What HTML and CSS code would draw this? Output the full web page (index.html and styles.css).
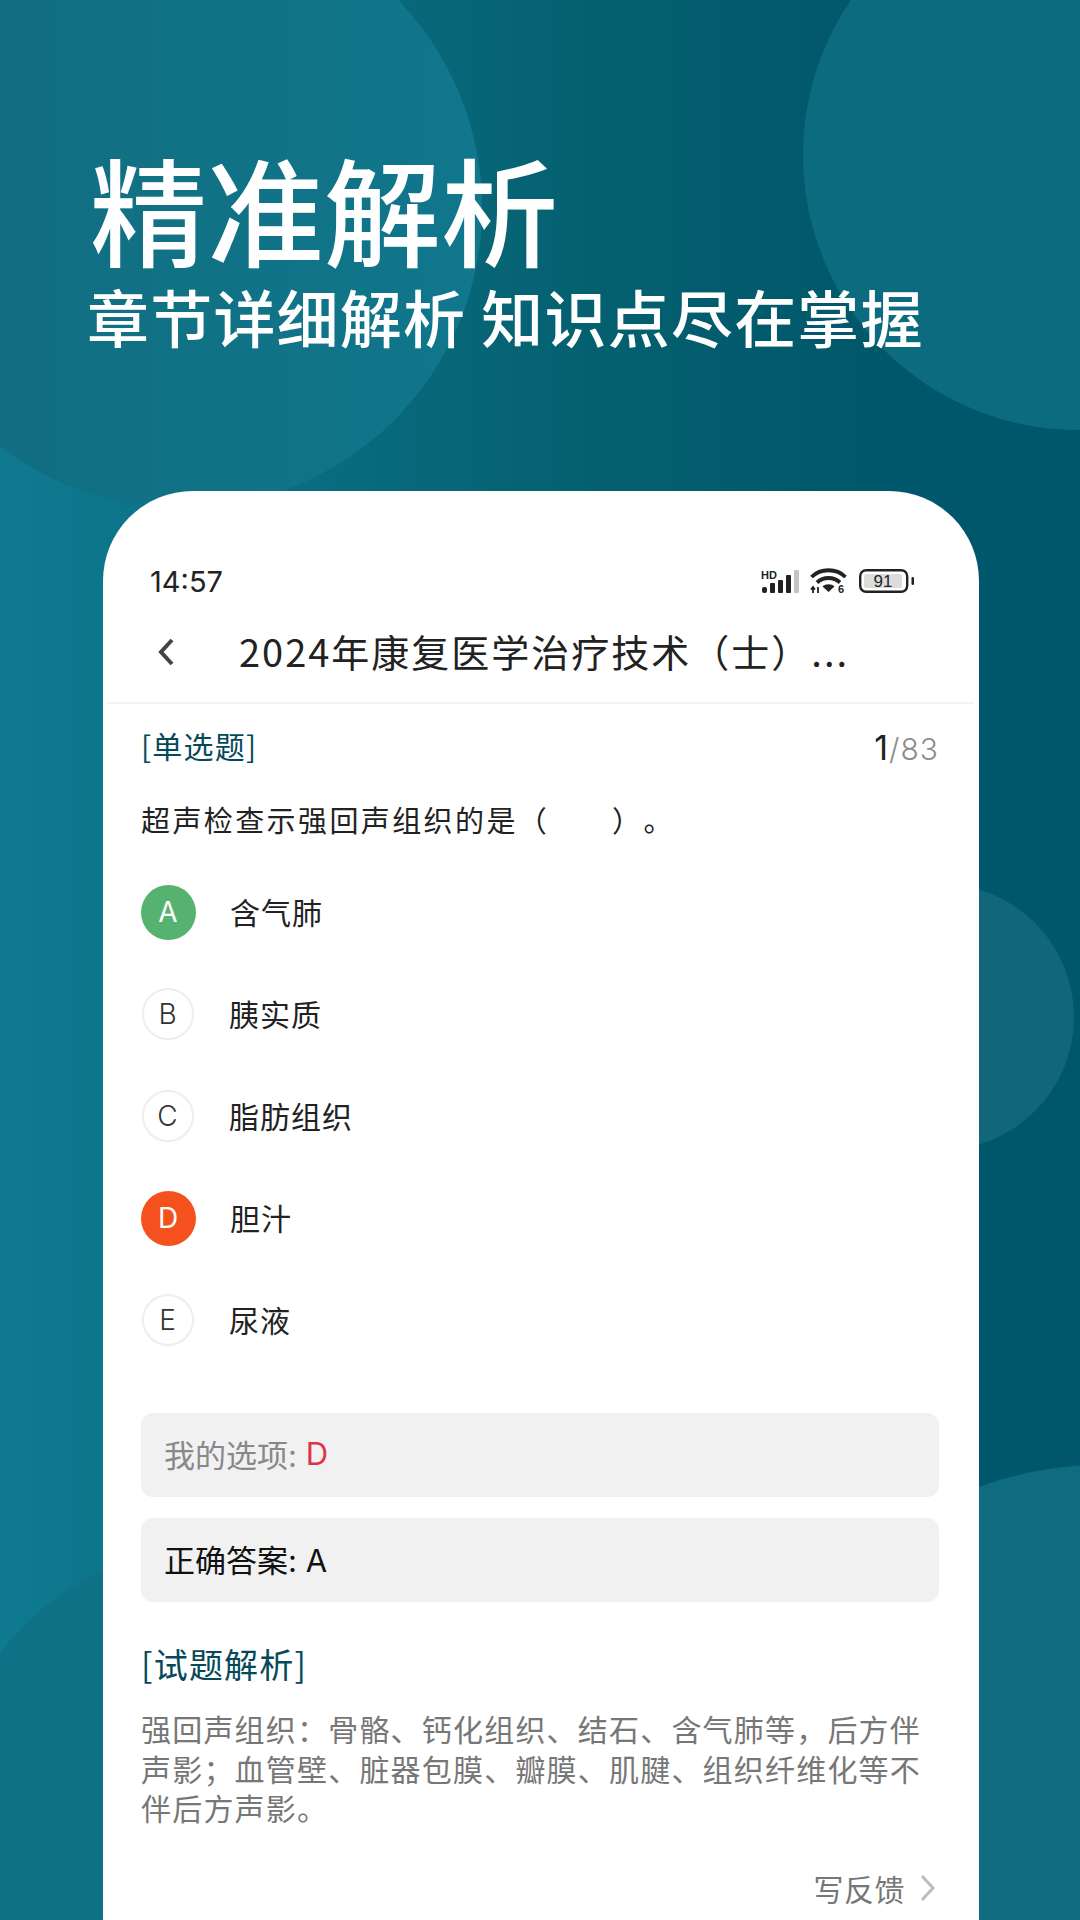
FILE: index.html
```html
<!DOCTYPE html>
<html lang="zh-CN">
<head>
    <meta charset="UTF-8">
    <meta name="viewport" content="width=device-width, initial-scale=1.0">
    <title>精准解析</title>
    <link rel="stylesheet" href="styles.css">
</head>
<body>
    <div class="screen">
        <!-- Background circles -->
        <div class="blob blob-top-left"></div>
        <div class="blob blob-top-right"></div>
        <div class="blob blob-mid-right"></div>
        <div class="blob blob-low-right"></div>
        <div class="blob blob-low-left"></div>

        <div class="hero">
            <h1>精准解析</h1>
            <h2>章节详细解析 知识点尽在掌握</h2>
        </div>

        <div class="phone">
            <!-- Status bar -->
            <div class="status-bar">
                <span class="clock">14:57</span>
                <div class="status-icons">
                    <svg class="icon-signal" width="39" height="25" viewBox="0 0 39 25">
                        <text x="0" y="10" class="hd">HD</text>
                        <rect x="1" y="18" width="5" height="6" rx="2" fill="#222"/>
                        <rect x="9" y="14" width="5" height="10" rx="1" fill="#222"/>
                        <rect x="17" y="11" width="5" height="13" rx="1" fill="#222"/>
                        <rect x="25" y="6" width="5" height="18" rx="1" fill="#222"/>
                        <rect x="33" y="1" width="5" height="23" rx="1" fill="#c4c4c4"/>
                    </svg>
                    <svg class="icon-wifi" width="37" height="26" viewBox="0 0 37 26">
                        <path d="M1.500 9C10.500 0 26.500 0 35.500 9" fill="none" stroke="#222" stroke-width="3.800"/>
                        <path d="M7 14.500C13.500 8.500 23.500 8.500 30 14.500" fill="none" stroke="#222" stroke-width="3.800"/>
                        <path d="M12.500 18.500C15.500 15.500 21.500 15.500 24.500 18.500L18.500 24Z" fill="#222"/>
                        <path d="M3 25V19M1 21.500L3 19L5 21.500M8 19V25" fill="none" stroke="#222" stroke-width="1.800"/>
                        <text x="28" y="25" class="wifi-six">6</text>
                    </svg>
                    <svg class="icon-battery" width="56" height="24" viewBox="0 0 56 24">
                        <rect x="1.200" y="1.200" width="47" height="21.600" rx="6" fill="none" stroke="#222" stroke-width="2.400"/>
                        <rect x="5" y="5" width="38" height="14" rx="2" fill="#dcdcdc"/>
                        <text x="24" y="18" class="battery-level">91</text>
                        <rect x="52.500" y="8" width="2.500" height="8" rx="1.200" fill="#222"/>
                    </svg>
                </div>
            </div>

            <!-- Nav bar -->
            <div class="nav-bar">
                <svg class="back" width="20" height="28" viewBox="0 0 20 28">
                    <path d="M16 2L5 14L16 26" fill="none" stroke="#444" stroke-width="4"/>
                </svg>
                <span class="nav-title">2024年康复医学治疗技术（士）...</span>
            </div>

            <div class="content">
                <div class="question-head">
                    <span class="tag">[单选题]</span>
                    <span class="counter"><b>1</b>/83</span>
                </div>
                <div class="question">超声检查示强回声组织的是（　　）。</div>

                <div class="options">
                    <div class="option"><span class="letter letter-right">A</span>含气肺</div>
                    <div class="option"><span class="letter">B</span>胰实质</div>
                    <div class="option"><span class="letter">C</span>脂肪组织</div>
                    <div class="option"><span class="letter letter-wrong">D</span>胆汁</div>
                    <div class="option"><span class="letter">E</span>尿液</div>
                </div>

                <div class="answer answer-mine">我的选项: <span class="answer-red">D</span></div>
                <div class="answer answer-correct">正确答案: A</div>

                <div class="section-title">[试题解析]</div>
                <p class="analysis">强回声组织：骨骼、钙化组织、结石、含气肺等，后方伴声影；血管壁、脏器包膜、瓣膜、肌腱、组织纤维化等不伴后方声影。</p>

                <div class="feedback">
                    写反馈
                    <svg width="16" height="28" viewBox="0 0 16 28">
                        <path d="M2 2L13 14L2 26" fill="none" stroke="#bdbdbd" stroke-width="3"/>
                    </svg>
                </div>
            </div>
        </div>
    </div>
</body>
</html>
```

FILE: styles.css
```css
* { box-sizing: border-box; }
html, body { margin: 0; padding: 0; }
body { font-family: Inter, "Noto Sans CJK SC", sans-serif; text-spacing-trim: space-all; }

.screen { position: relative; width: 1080px; height: 1920px; overflow: hidden; background: linear-gradient(90deg, #0f7a90 0%, #0b6e83 25%, #04606f 55%, #00566a 85%, #00566a 100%); }

.blob { position: absolute; border-radius: 50%; }
.blob-top-left { left: -118px; top: -92px; width: 600px; height: 600px; background: linear-gradient(90deg, #126c80 0%, #117185 50%, #10778d 100%); }
.blob-top-right { left: 803px; top: -120px; width: 550px; height: 550px; background: #0d6b80; }
.blob-mid-right { left: 808px; top: 884px; width: 266px; height: 266px; background: #12667a; }
.blob-low-right { left: 755px; top: 1465px; width: 690px; height: 690px; background: #0f6b80; }
.blob-low-left { left: -48px; top: 1552px; width: 496px; height: 496px; background: #0e7186; }

.hero { position: relative; height: 491px; padding: 136px 0 0 90px; color: #fff; font-family: "Noto Sans CJK SC", sans-serif; }
.hero h1 { margin: 0; font-size: 117px; line-height: 143px; font-weight: 500; }
.hero h2 { margin: 0 0 0 -3px; font-size: 62px; line-height: 74px; font-weight: 500; letter-spacing: 1.2px; }

.phone { position: relative; width: 876px; height: 1429px; margin-left: 103px; padding-top: 70px; background: #fff; border-radius: 90px 90px 0 0; }

.status-bar { display: flex; justify-content: space-between; align-items: center; height: 40px; padding: 0 64px 0 47px; }
.clock { font-size: 29px; color: #222; }
.status-icons { display: flex; align-items: center; gap: 12px; }
.icon-signal { margin-right: -2px; }
.hd { font: 700 11px "Liberation Sans", sans-serif; fill: #222; }
.wifi-six { font: 700 11px "Liberation Sans", sans-serif; fill: #222; }
.battery-level { font: 400 17px "Liberation Sans", sans-serif; fill: #222; text-anchor: middle; }

.nav-bar { display: flex; align-items: center; height: 102px; margin: 1px 5px 0 4px; padding-left: 49px; border-bottom: 2px solid #f3f3f3; }
.back { flex-shrink: 0; margin-right: 63px; }
.nav-title { margin-bottom: 4px; font-size: 38px; color: #222; font-family: "Noto Sans CJK SC", sans-serif; letter-spacing: 2px; }

.content { padding: 0 40px 0 38px; }

.question-head { display: flex; justify-content: space-between; align-items: center; height: 86px; }
.tag { margin-bottom: 4px; font-size: 30px; letter-spacing: 1.2px; color: #06495a; font-family: "Noto Sans CJK SC", sans-serif; }
.counter { font-size: 30px; font-weight: 300; letter-spacing: 1px; color: #8c8c8c; }
.counter b { font-size: 34px; font-weight: 400; color: #222; }

.question { height: 58px; line-height: 58px; font-size: 29px; letter-spacing: 2.4px; color: #222; white-space: nowrap; font-family: "Noto Sans CJK SC", sans-serif; }

.options { margin-top: 13px; }
.option { display: flex; align-items: center; height: 102px; padding-bottom: 2px; font-size: 30px; letter-spacing: 1px; color: #222; font-family: "Noto Sans CJK SC", sans-serif; }
.letter { display: flex; align-items: center; justify-content: center; flex-shrink: 0; width: 52px; height: 52px; margin: 2px 35px 0 1px; border: 2px solid #eeeeee; border-radius: 50%; font-family: Inter, sans-serif; font-size: 28px; font-weight: 300; color: #333; }
.letter-right, .letter-wrong { width: 55px; height: 55px; margin: 2px 34px 0 0; border: none; font-weight: 400; color: #fff; }
.letter-right { background: #56b26f; }
.letter-wrong { background: #f4511e; }

.answer { display: flex; align-items: center; height: 84px; padding: 0 0 3px 23px; background: #f1f1f1; border-radius: 12px; font-size: 31px; white-space: pre; }
.answer-mine { margin-top: 42px; color: #888; }
.answer-red { color: #e0314b; }
.answer-correct { margin-top: 21px; color: #111; }

.section-title { height: 50px; line-height: 50px; margin-top: 37px; font-size: 34px; letter-spacing: 1.2px; color: #06495a; font-family: "Noto Sans CJK SC", sans-serif; }

.analysis { margin: 20px 0 0; font-size: 30px; line-height: 39.5px; letter-spacing: 1.2px; color: #777; font-family: "Noto Sans CJK SC", sans-serif; }

.feedback { display: flex; justify-content: flex-end; align-items: center; gap: 15px; height: 40px; margin-top: 40px; padding-right: 3px; font-size: 30px; letter-spacing: 0.5px; color: #777; font-family: "Noto Sans CJK SC", sans-serif; }
```
